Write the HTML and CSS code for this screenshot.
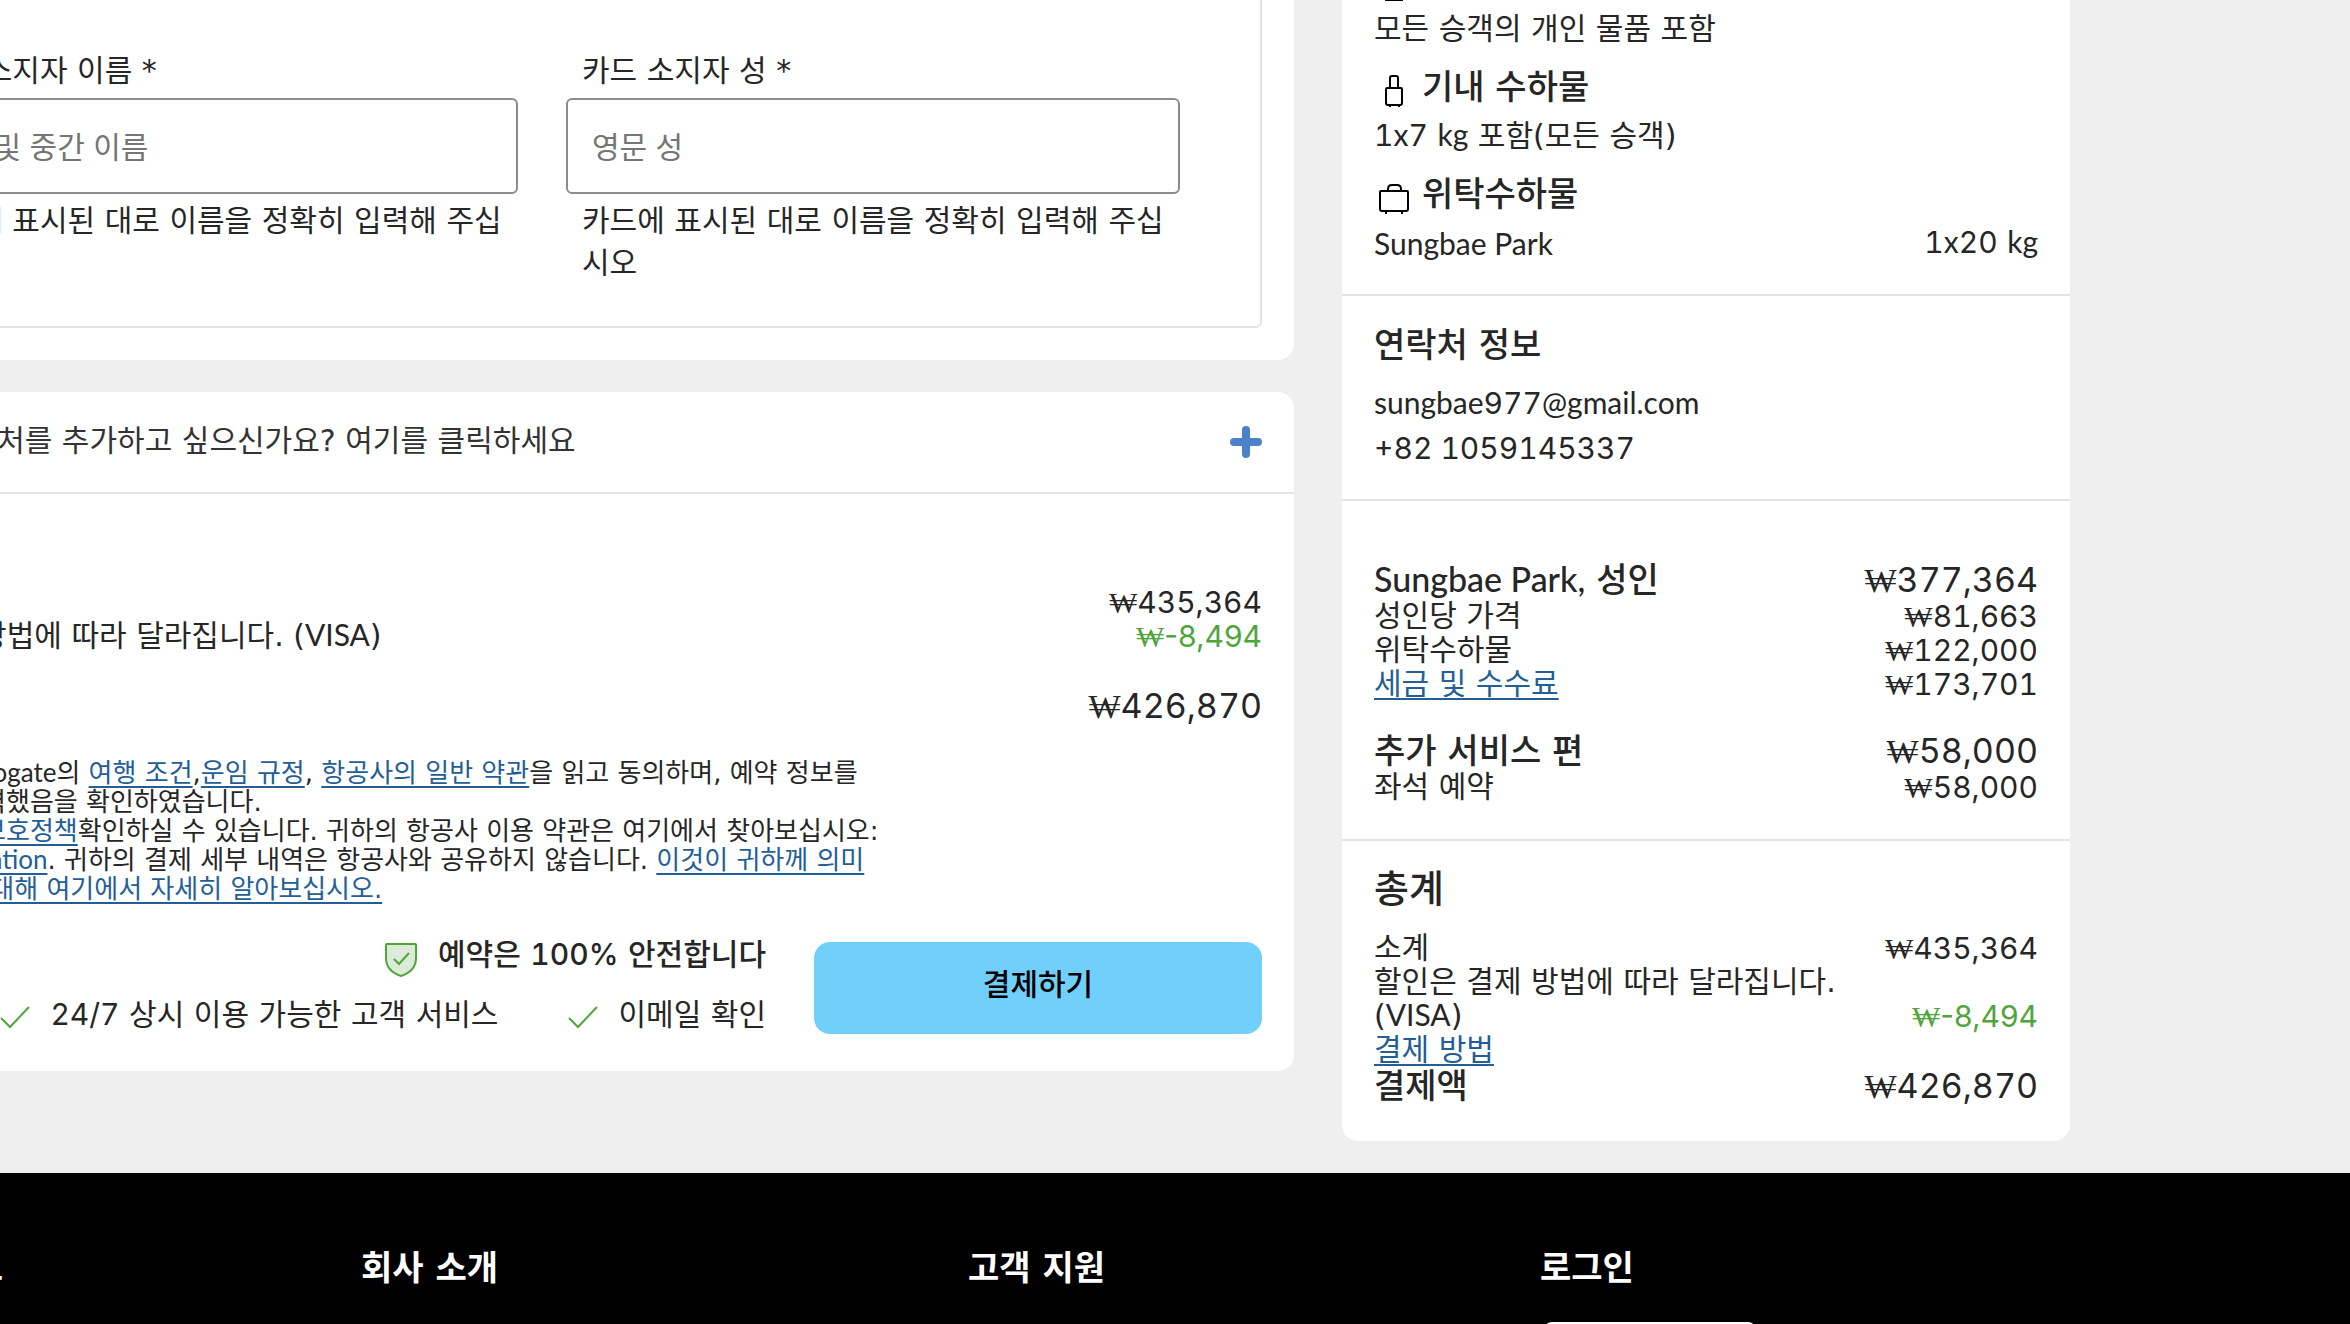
FILE: index.html
```html
<!DOCTYPE html>
<html lang="ko">
<head>
  <meta charset="UTF-8" />
  <meta name="viewport" content="width=device-width, initial-scale=1" />
  <title>결제</title>
  <link rel="stylesheet" href="styles.css">
</head>
<body>
  <div class="checkout">
    <main class="main">
      <section class="card card-payment">
        <form class="card-form">
          <div class="field">
            <label for="firstName">카드 소지자 이름 *</label>
            <input type="text" id="firstName" placeholder="이름 및 중간 이름" />
            <p class="hint">카드에 표시된 대로 이름을 정확히 입력해 주십시오</p>
          </div>
          <div class="field">
            <label for="lastName">카드 소지자 성 *</label>
            <input type="text" id="lastName" placeholder="영문 성" />
            <p class="hint">카드에 표시된 대로 이름을 정확히 입력해 주십시오</p>
          </div>
        </form>
      </section>

      <section class="card">
        <button type="button" class="expand">
          <span>비상시용 연락처를 추가하고 싶으신가요? 여기를 클릭하세요</span>
          <svg class="icon-plus" viewBox="0 0 32 32"><path d="M16 4v24M4 16h24" /></svg>
        </button>

        <div class="pay">
          <div class="row">
            <span>소계</span>
            <span class="num"><span class="won">₩</span>435,364</span>
          </div>
          <div class="row">
            <span>할인은 결제 방법에 따라 달라집니다. (<span class="latin">VISA</span>)</span>
            <span class="num discount"><span class="won">₩</span>-8,494</span>
          </div>
          <div class="row row-big pay-total">
            <span>총계</span>
            <span class="num"><span class="won">₩</span>426,870</span>
          </div>

          <p class="terms">
            고객본인은 <span class="latin">Gotogate</span>의 <a href="#">여행 조건</a>,<a href="#">운임 규정</a>, <a href="#">항공사의 일반 약관</a>을 읽고 동의하며, 예약 정보를<br>
            모두 정확히 입력했음을 확인하였습니다.<br>
            그 외에 <a href="#">개인정보호정책</a>확인하실 수 있습니다. 귀하의 항공사 이용 약관은 여기에서 찾아보십시오:<br>
            <a href="#" class="latin">Airlines Information</a>. 귀하의 결제 세부 내역은 항공사와 공유하지 않습니다. <a href="#">이것이 귀하께 의미<br>
            하는 모든 바에 대해 여기에서 자세히 알아보십시오.</a>
          </p>

          <div class="confirm">
            <div class="trust">
              <div class="trust-item safe">
                <svg class="icon-shield" viewBox="0 0 34 36">
                  <path class="shield-body" d="M3 2h28q1 0 1 1v13c0 9-6 15-15 18C8 31 2 25 2 16V3q0-1 1-1z" />
                  <path d="M10 17l5 5 10-11" />
                </svg>
                <span>예약은 <span class="num">100%</span> 안전합니다</span>
              </div>
              <div class="trust-list">
                <div class="trust-item">
                  <svg class="icon-check" viewBox="0 0 30 24"><path d="M1 13l9 9L29 2" /></svg>
                  <span><span class="num">24/7</span> 상시 이용 가능한 고객 서비스</span>
                </div>
                <div class="trust-item">
                  <svg class="icon-check" viewBox="0 0 30 24"><path d="M1 13l9 9L29 2" /></svg>
                  <span>이메일 확인</span>
                </div>
              </div>
            </div>
            <button type="button" class="pay-btn">결제하기</button>
          </div>
        </div>
      </section>
    </main>

    <aside class="summary">
      <section class="bags">
        <h3>
          <svg class="icon-bag" viewBox="0 0 48 38"><path d="M12 20h16v19H12z" /></svg>개인 물품
        </h3>
        <p>모든 승객의 개인 물품 포함</p>
        <h3>
          <svg class="icon-bag" viewBox="0 0 48 38">
            <path d="M16 20V10q0-2 2-2h4q2 0 2 2v10M13 20h14q1 0 1 1v14q0 2-2 2H14q-2 0-2-2V21q0-1 1-1zM16 37v2M25 37v2" />
          </svg>기내 수하물
        </h3>
        <p><span class="num">1</span><span class="latin">x</span><span class="num">7</span> <span class="latin">kg</span> 포함(모든 승객)</p>
        <h3>
          <svg class="icon-bag" viewBox="0 0 48 38">
            <path d="M14 16v-2q0-4 4-4h5q4 0 4 4v2M7 16h26q1 0 1 1v17q0 2-2 2H8q-2 0-2-2V17q0-1 1-1zM12 36v3M28 36v3" />
          </svg>위탁수하물
        </h3>
        <div class="row">
          <span class="latin">Sungbae Park</span>
          <span><span class="num">1</span><span class="latin">x</span><span class="num">20</span> <span class="latin">kg</span></span>
        </div>
      </section>

      <section class="contact">
        <h3>연락처 정보</h3>
        <p class="latin">sungbae<span class="num">977</span>@gmail.com</p>
        <p class="num">+82 1059145337</p>
      </section>

      <section class="prices">
        <div class="row row-big">
          <span><span class="latin">Sungbae Park,</span> 성인</span>
          <span class="num"><span class="won">₩</span>377,364</span>
        </div>
        <div class="row">
          <span>성인당 가격</span>
          <span class="num"><span class="won">₩</span>81,663</span>
        </div>
        <div class="row">
          <span>위탁수하물</span>
          <span class="num"><span class="won">₩</span>122,000</span>
        </div>
        <div class="row">
          <a href="#">세금 및 수수료</a>
          <span class="num"><span class="won">₩</span>173,701</span>
        </div>
        <div class="row row-big extras">
          <span>추가 서비스 편</span>
          <span class="num"><span class="won">₩</span>58,000</span>
        </div>
        <div class="row">
          <span>좌석 예약</span>
          <span class="num"><span class="won">₩</span>58,000</span>
        </div>
      </section>

      <section class="total">
        <h2>총계</h2>
        <div class="row">
          <span>소계</span>
          <span class="num"><span class="won">₩</span>435,364</span>
        </div>
        <div class="row">
          <span>할인은 결제 방법에 따라 달라집니다.<br>(<span class="latin">VISA</span>)</span>
          <span class="num discount"><span class="won">₩</span>-8,494</span>
        </div>
        <div class="row">
          <a href="#">결제 방법</a>
        </div>
        <div class="row row-big">
          <span>결제액</span>
          <span class="num"><span class="won">₩</span>426,870</span>
        </div>
      </section>
    </aside>
  </div>

  <footer class="footer">
    <div><h3>여행 정보</h3></div>
    <div><h3>회사 소개</h3></div>
    <div><h3>고객 지원</h3></div>
    <div>
      <h3>로그인</h3>
      <button type="button" class="login-btn">내 예약</button>
    </div>
  </footer>
</body>
</html>
```

FILE: styles.css
```css
* {
    margin: 0;
    padding: 0;
    box-sizing: border-box;
}

body {
    font-family: "DejaVu Sans", "Noto Sans CJK KR", sans-serif;
    font-size: 30px;
    line-height: 34px;
    color: #262626;
    background: #efefef;
    height: 100vh;
    overflow: hidden;
}

a {
    color: #245e97;
    text-decoration: underline;
    text-decoration-thickness: 2px;
    text-underline-offset: 4px;
}

h2 {
    font-size: 38px;
    line-height: 44px;
    font-weight: 500;
}

h3 {
    font-size: 34px;
    line-height: 38px;
    font-weight: 500;
}

svg {
    fill: none;
    flex: none;
}

.num {
    font-family: Inter, "Noto Sans CJK KR", sans-serif;
    font-variant-numeric: tabular-nums;
}

.latin {
    font-family: Lato, "Noto Sans CJK KR", sans-serif;
}

.won {
    font-family: "Liberation Serif", serif;
    font-weight: 400;
}

/* mixed fonts must not make the line taller */
span .num,
span .latin,
p .num,
p .latin,
.won {
    line-height: 0;
}

.discount {
    color: #4fa53c;
    font-variant-numeric: normal;
}

/* layout */
.checkout {
    display: flex;
    align-items: flex-start;
    gap: 48px;
    margin: -40px 280px 32px -210px;
}

.main {
    flex: 1504;
    display: flex;
    flex-direction: column;
    gap: 32px;
}

.card {
    background: #fff;
    border-radius: 16px;
}

.card-payment {
    padding: 32px;
}

.card-form {
    display: grid;
    grid-template-columns: 1fr 1fr;
    gap: 48px;
    padding: 56px 80px 42px;
    border: 2px solid #e3e3e3;
    border-radius: 6px;
}

.field {
    line-height: 42px;
}

.field label {
    display: block;
    padding-left: 16px;
    margin-bottom: 6px;
}

.field input {
    display: block;
    width: 100%;
    height: 96px;
    padding: 0 24px 2px;
    border: 2px solid #8c8c8c;
    border-radius: 6px;
    font-family: "Noto Sans CJK KR", sans-serif;
    font-size: 30px;
}

.field input::placeholder {
    color: #757575;
}

.hint {
    padding: 6px 0 0 16px;
}

.expand {
    display: flex;
    align-items: center;
    justify-content: space-between;
    width: 100%;
    height: 102px;
    padding: 0 32px;
    border: none;
    border-bottom: 2px solid #e3e3e3;
    background: none;
    color: #333;
    font: inherit;
    cursor: pointer;
}

.expand span {
    padding-bottom: 3px;
}

.icon-plus {
    width: 32px;
    height: 32px;
    stroke: #4b83cb;
    stroke-width: 8;
    stroke-linecap: round;
}

.row {
    display: flex;
    justify-content: space-between;
    align-items: flex-end;
}

.row-big {
    font-size: 34px;
    line-height: 38px;
    font-weight: 500;
}

.row-big .num {
    font-weight: 400;
}

.pay {
    padding: 91px 32px 37px;
}

.pay-total {
    margin-top: 34px;
}

.terms {
    margin: 34px 0 38px;
    font-size: 26px;
    line-height: 29px;
    white-space: nowrap;
}

.confirm {
    display: flex;
    justify-content: flex-end;
    gap: 48px;
}

.trust {
    display: flex;
    flex-direction: column;
    align-items: flex-end;
    gap: 26px;
    margin-top: -4px;
    white-space: nowrap;
}

.trust-list {
    display: flex;
    gap: 70px;
}

.trust-item {
    display: flex;
    align-items: center;
    height: 34px;
    gap: 20px;
}

.safe {
    font-weight: 500;
}

.icon-shield {
    width: 34px;
    height: 36px;
    margin-top: 10px;
    stroke: #4fa53c;
    stroke-width: 2;
}

.shield-body {
    fill: #dcebd8;
}

.icon-check {
    width: 30px;
    height: 24px;
    margin-top: 4px;
    stroke: #4fa53c;
    stroke-width: 2;
}

.pay-btn {
    width: 448px;
    height: 92px;
    padding-bottom: 6px;
    border: none;
    border-radius: 16px;
    background: #70d0fb;
    color: #000;
    font: inherit;
    font-weight: 500;
    cursor: pointer;
}

/* booking summary */
.summary {
    flex: 728;
    background: #fff;
    border-radius: 16px;
}

.summary section {
    padding: 0 32px;
}

.summary section + section {
    border-top: 2px solid #e3e3e3;
}

.summary .bags {
    padding-top: 1px;
    padding-bottom: 34px;
}

.bags h3 {
    display: flex;
    align-items: center;
    margin: 22px 0 13px;
}

.bags h3:first-child {
    margin-top: 0;
}

.icon-bag {
    width: 48px;
    height: 38px;
    overflow: visible;
    stroke: #000;
    stroke-width: 2;
}

.summary .contact {
    padding-top: 30px;
    padding-bottom: 28px;
}

.contact h3 {
    margin-bottom: 15px;
}

.contact p {
    line-height: 46px;
}

.summary .prices {
    padding-top: 60px;
    padding-bottom: 35px;
}

.extras {
    margin-top: 31px;
}

.summary .total {
    padding-top: 26px;
    padding-bottom: 36px;
}

.total h2 {
    margin-bottom: 20px;
}

/* footer */
.footer {
    display: grid;
    grid-template-columns: 361fr 607fr 572fr 530fr;
    padding: 76px 280px 0 0;
    background: #000;
    color: #fff;
}

.footer div:first-child {
    margin-left: -134px;
}

.footer h3 {
    font-weight: 700;
}

.login-btn {
    width: 212px;
    height: 60px;
    margin: 35px 0 0 4px;
    border: none;
    border-radius: 8px;
    background: #fff;
    font: inherit;
}
```
